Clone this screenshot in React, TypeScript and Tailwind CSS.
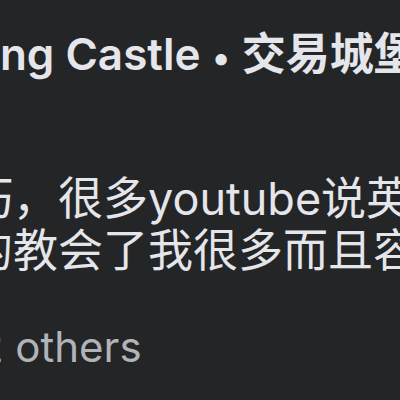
import React from 'react';

// Cropped view of a dark-mode group post: header, body text and reactions row.
const latin = "font-['Inter','Noto_Sans_CJK_SC',sans-serif]";

export default function App() {
    return (
        <div className={`w-[400px] h-[400px] overflow-hidden bg-[#242526] ${latin}`}>
            <div className="flex flex-col pt-[28px]">
                {/* Post header: group name */}
                <div className="-ml-[133px] whitespace-nowrap text-[44px] leading-[52px] font-semibold text-[#e4e6eb]">
                    Learning Castle <span className="text-[36px] leading-none font-medium">•</span> 交易城堡
                </div>

                {/* Post text */}
                <div className="mt-[93px] -ml-[77px] text-[45px] leading-[52px] text-[#e4e6eb]">
                    <p className="whitespace-nowrap">技巧，很多youtube说英</p>
                    <p className="whitespace-nowrap">语的教会了我很多而且容易理解</p>
                </div>

                {/* Reactions row */}
                <div className="mt-[46px] -ml-[108px] whitespace-nowrap text-[42px] leading-[48px] text-[#b0b3b8]">
                    and 2 others
                </div>
            </div>
        </div>
    );
}
